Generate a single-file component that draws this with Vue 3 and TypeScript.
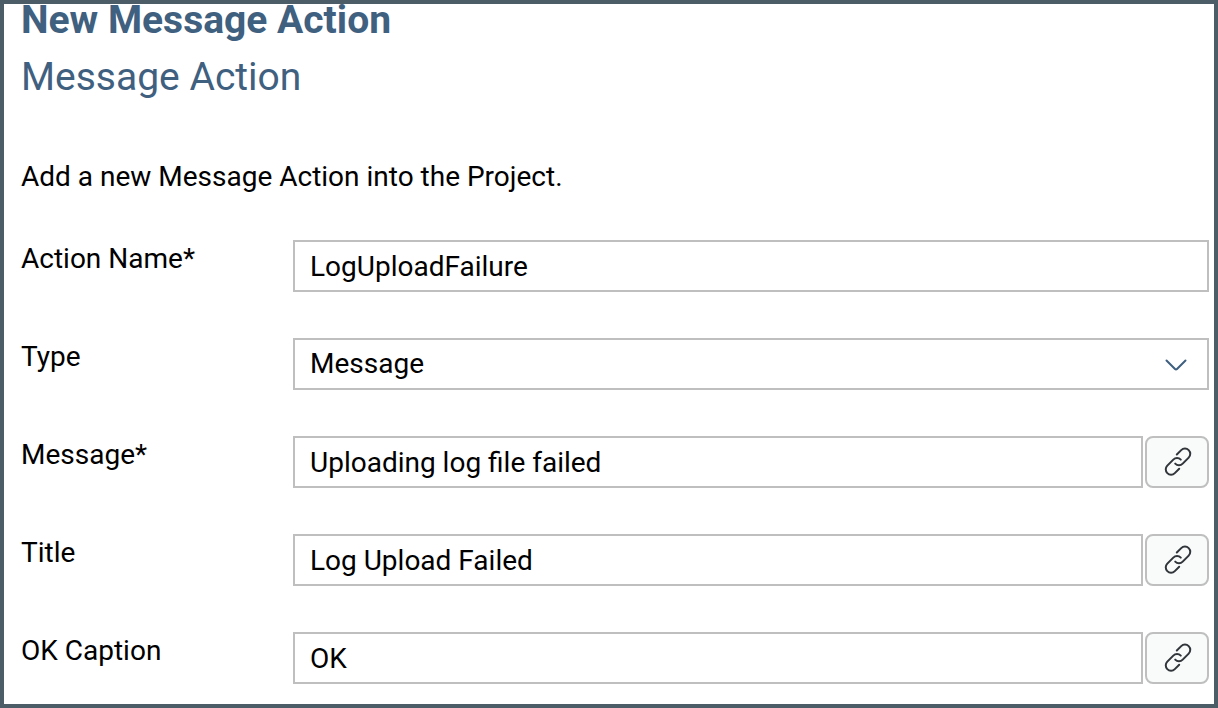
<script setup lang="ts">
import { reactive } from 'vue'

interface Field {
  id: string
  label: string
  value: string
  kind: 'text' | 'select' | 'bindable'
}

const fields = reactive<Field[]>([
  { id: 'action-name', label: 'Action Name*', value: 'LogUploadFailure', kind: 'text' },
  { id: 'type', label: 'Type', value: 'Message', kind: 'select' },
  { id: 'message', label: 'Message*', value: 'Uploading log file failed', kind: 'bindable' },
  { id: 'title', label: 'Title', value: 'Log Upload Failed', kind: 'bindable' },
  { id: 'ok-caption', label: 'OK Caption', value: 'OK', kind: 'bindable' },
])
</script>

<template>
  <main class="dialog">
    <h1 class="title">New Message Action</h1>
    <h2 class="subtitle">Message Action</h2>
    <p class="intro">Add a new Message Action into the Project.</p>
    <form class="form" @submit.prevent>
      <div v-for="field in fields" :key="field.id" class="row">
        <label class="label" :for="field.id">{{ field.label }}</label>
        <div v-if="field.kind === 'select'" class="control select-wrap">
          <select :id="field.id" v-model="field.value" class="box">
            <option>Message</option>
          </select>
          <svg class="chevron" viewBox="0 0 24 24" aria-hidden="true">
            <path d="M2.500 7.500 11 16q1 1 2 0l8.500-8.500" />
          </svg>
        </div>
        <div v-else class="control">
          <input :id="field.id" v-model="field.value" class="box" type="text" />
          <button v-if="field.kind === 'bindable'" class="bind" type="button" :aria-label="`Bind ${field.label}`">
            <svg class="link" viewBox="0 0 32 32" aria-hidden="true">
              <path d="M15.800 8.500 20.200 4.100a5.300 5.300 0 0 1 7.500 7.500l-6 6a5.300 5.300 0 0 1-7.500 0" />
              <path d="M18.200 22.700 13.800 27.100a5.300 5.300 0 0 1-7.500-7.500l6-6a5.300 5.300 0 0 1 7.500 0" />
            </svg>
          </button>
        </div>
      </div>
    </form>
  </main>
</template>

<style>
body {
  margin: 0;
}
</style>

<style scoped>
.dialog {
  box-sizing: border-box;
  min-height: 100vh;
  padding: 0 5px 20px 17px;
  border: 4px solid #4c5d68;
  background: #fff;
  color: #000;
  font-family: Roboto, "Liberation Sans", sans-serif;
  font-size: 28px;
  line-height: 38px;
}
.title {
  margin: 0 0 16px;
  color: #3f607f;
  font-size: 39px;
  font-weight: 700;
  line-height: 32px;
}
.subtitle {
  margin: 0;
  color: #3f607f;
  font-size: 39px;
  font-weight: 400;
  line-height: 50px;
}
.intro {
  margin: 56px 0 44px;
}
.form {
  display: grid;
  gap: 46px;
}
.row {
  display: grid;
  grid-template-columns: 272px minmax(0, 1fr);
  align-items: start;
}
.control {
  display: flex;
  gap: 2px;
}
.select-wrap {
  position: relative;
}
.box {
  box-sizing: border-box;
  flex: 1;
  min-width: 0;
  height: 52px;
  margin: 0;
  padding: 0 15px;
  border: 2px solid #bfbfbf;
  border-radius: 0;
  outline: none;
  appearance: none;
  background: #fff;
  color: #000;
  font: inherit;
}
.chevron {
  position: absolute;
  top: 15px;
  right: 21px;
  width: 24px;
  height: 24px;
  fill: none;
  stroke: #3f5f7f;
  stroke-width: 2;
  stroke-linecap: round;
  pointer-events: none;
}
.bind {
  display: flex;
  align-items: center;
  justify-content: center;
  box-sizing: border-box;
  width: 64px;
  height: 52px;
  padding: 0;
  border: 2px solid #bfbfbf;
  border-radius: 8px;
  background: #f9fbfb;
}
.link {
  width: 32px;
  height: 32px;
  fill: none;
  stroke: #32363a;
  stroke-width: 2;
  stroke-linecap: round;
}
</style>
